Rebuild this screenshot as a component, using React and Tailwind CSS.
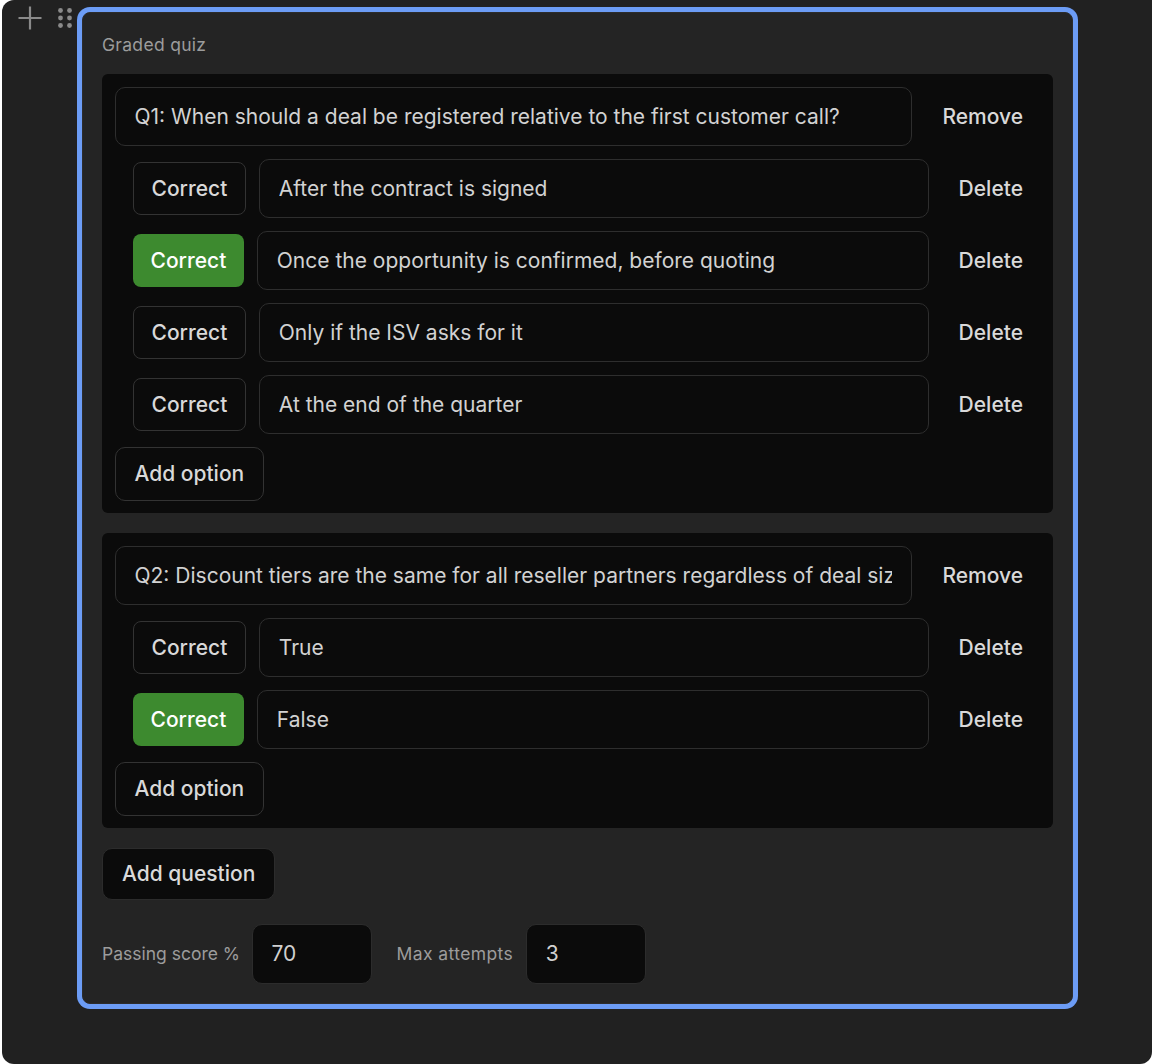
import { useState } from 'react';

const quizData = [
    {
        id: 1,
        text: 'Q1: When should a deal be registered relative to the first customer call?',
        options: [
            { id: 'a', text: 'After the contract is signed', correct: false },
            { id: 'b', text: 'Once the opportunity is confirmed, before quoting', correct: true },
            { id: 'c', text: 'Only if the ISV asks for it', correct: false },
            { id: 'd', text: 'At the end of the quarter', correct: false },
        ],
    },
    {
        id: 2,
        text: 'Q2: Discount tiers are the same for all reseller partners regardless of deal size',
        options: [
            { id: 'a', text: 'True', correct: false },
            { id: 'b', text: 'False', correct: true },
        ],
    },
];

const PlusIcon = () => (
    <svg width="24" height="24" viewBox="0 0 24 24" fill="none" stroke="#8a8a8a" strokeWidth="2.2">
        <path d="M12 0.5v23M0.5 12h23" />
    </svg>
);

const GripIcon = () => (
    <svg width="16" height="22" viewBox="0 0 16 22" fill="#8a8a8a">
        <circle cx="3.5" cy="3.5" r="2.4" />
        <circle cx="12.5" cy="3.5" r="2.4" />
        <circle cx="3.5" cy="11" r="2.4" />
        <circle cx="12.5" cy="11" r="2.4" />
        <circle cx="3.5" cy="18.5" r="2.4" />
        <circle cx="12.5" cy="18.5" r="2.4" />
    </svg>
);

const QuestionBlock = ({ question, onToggle }) => (
    <div className="flex flex-col gap-[12.5px] rounded-[6px] bg-[#0b0b0b] px-[12.5px] py-[12.5px]">
        <div className="flex items-center gap-[12.5px]">
            <input
                readOnly
                value={question.text}
                className="h-[59.5px] min-w-0 flex-1 rounded-[10px] border border-[#2e2e2e] bg-[#0b0b0b] px-[19px] text-[21px] text-[#d2d2d2] outline-none"
            />
            <button className="h-[50px] px-[17.5px] text-[21px] font-medium text-[#d9d9d9]">Remove</button>
        </div>

        {question.options.map((opt) => (
            <div key={opt.id} className="flex items-center gap-[12.5px] pl-[18px]">
                <button
                    onClick={() => onToggle(question.id, opt.id)}
                    className={
                        opt.correct
                            ? 'h-[53px] rounded-[8px] bg-[#3d8a2f] px-[18px] text-[21px] font-medium text-white'
                            : 'h-[53px] rounded-[8px] border border-[#333333] bg-[#0b0b0b] px-[18px] text-[21px] font-medium text-[#d9d9d9]'
                    }
                >
                    Correct
                </button>
                <input
                    readOnly
                    value={opt.text}
                    className="h-[59.5px] min-w-0 flex-1 rounded-[10px] border border-[#2e2e2e] bg-[#0b0b0b] px-[19px] text-[21px] text-[#d2d2d2] outline-none"
                />
                <button className="h-[50px] px-[17.5px] text-[21px] font-medium text-[#d9d9d9]">Delete</button>
            </div>
        ))}

        <div>
            <button className="h-[54px] rounded-[10px] border border-[#333333] bg-[#0b0b0b] px-[19px] text-[21px] font-medium text-[#d9d9d9]">
                Add option
            </button>
        </div>
    </div>
);

const App = () => {
    const [questions, setQuestions] = useState(quizData);

    const toggleCorrect = (qid, oid) => {
        setQuestions((prev) =>
            prev.map((q) =>
                q.id !== qid ? q : { ...q, options: q.options.map((o) => ({ ...o, correct: o.id === oid })) }
            )
        );
    };

    return (
        <div className="min-h-screen bg-white pl-[2px] font-['Inter',sans-serif]">
            <div className="flex h-[1064px] w-[1150px] items-start rounded-[12px] rounded-tr-none bg-[#212121] pt-[6px]">
                {/* hover controls */}
                <div className="flex w-[80px] shrink-0 items-start gap-[15px] pl-[16px]">
                    <PlusIcon />
                    <div className="pt-[1px]">
                        <GripIcon />
                    </div>
                </div>

                <div className="mt-[6px] w-[991px] rounded-[8px] border border-[#2c2c2c] bg-[#242424] p-[19px] ring-[5px] ring-[#6c9cf5]">
                    <div className="mb-[17px] text-[17.5px] leading-[25px] text-[#9c9c9c] tracking-[0.3px]">Graded quiz</div>

                    <div className="flex flex-col gap-[20px]">
                        {questions.map((q) => (
                            <QuestionBlock key={q.id} question={q} onToggle={toggleCorrect} />
                        ))}
                    </div>

                    <button className="mt-[20px] h-[52px] rounded-[10px] border border-[#2c2c2c] bg-[#0b0b0b] px-[19px] text-[21px] font-medium text-[#dadada]">
                        Add question
                    </button>

                    <div className="mt-[24px] flex items-center gap-[25px]">
                        <label className="flex items-center gap-[11.5px] text-[17.5px] text-[#9c9c9c]">
                            Passing score %
                            <input
                                readOnly
                                value="70"
                                className="h-[59.5px] w-[120px] rounded-[10px] border border-[#2c2c2c] bg-[#0b0b0b] px-[19px] text-[21px] text-[#d0d0d0] outline-none"
                            />
                        </label>
                        <label className="flex items-center gap-[12.5px] text-[17.5px] tracking-[0.4px] text-[#9c9c9c]">
                            Max attempts
                            <input
                                readOnly
                                value="3"
                                className="h-[59.5px] w-[120px] rounded-[10px] border border-[#2c2c2c] bg-[#0b0b0b] px-[19px] text-[21px] tracking-normal text-[#d0d0d0] outline-none"
                            />
                        </label>
                    </div>
                </div>
            </div>
        </div>
    );
};

export default App;
